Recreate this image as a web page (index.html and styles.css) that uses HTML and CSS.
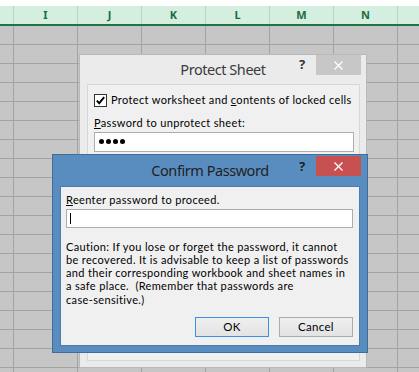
FILE: index.html
```html
<!DOCTYPE html>
<html lang="en">
<head>
<meta charset="utf-8">
<title>Confirm Password</title>
<link rel="stylesheet" href="styles.css">
</head>
<body>
<div class="screen">
  <div class="colhead">
    <div class="hc edge"></div>
    <div class="hc">I</div>
    <div class="hc">J</div>
    <div class="hc">K</div>
    <div class="hc">L</div>
    <div class="hc">M</div>
    <div class="hc">N</div>
    <div class="hc"></div>
  </div>
  <div class="grid"></div>

  <section class="win protect">
    <header class="titlebar">
      <span class="title">Protect Sheet</span>
      <div class="controls">
        <span class="help">?</span>
        <span class="close"><svg width="9" height="9" viewBox="0 0 9 9"><path d="M0.5 0.5 L8.5 8.5 M8.5 0.5 L0.5 8.5" stroke="#fff" stroke-width="1.3" fill="none"/></svg></span>
      </div>
    </header>
    <div class="panel">
      <div class="check-row">
        <span class="checkbox"><svg width="11" height="11" viewBox="0 0 11 11"><path d="M1.8 5.6 L4.2 8.2 L9.2 2.2" stroke="#000" stroke-width="1.9" fill="none"/></svg></span>
        <span class="text">Protect worksheet and <u>c</u>ontents of locked cells</span>
      </div>
      <div class="text pw-label"><u>P</u>assword to unprotect sheet:</div>
      <div class="pw-input"><span class="dot"></span><span class="dot"></span><span class="dot"></span><span class="dot"></span></div>
    </div>
  </section>

  <section class="win confirm">
    <header class="titlebar">
      <span class="title">Confirm Password</span>
      <div class="controls">
        <span class="help">?</span>
        <span class="close"><svg width="9" height="9" viewBox="0 0 9 9"><path d="M0.5 0.5 L8.5 8.5 M8.5 0.5 L0.5 8.5" stroke="#fff" stroke-width="1.3" fill="none"/></svg></span>
      </div>
    </header>
    <div class="cbody">
      <div class="text"><u>R</u>eenter password to proceed.</div>
      <div class="c-input"><span class="caret"></span></div>
      <p class="text caution">Caution: If you lose or forget the password, it cannot<br>be recovered. It is advisable to keep a list of passwords<br>and their corresponding workbook and sheet names in<br>a safe place.&nbsp; (Remember that passwords are<br>case-sensitive.)</p>
      <div class="buttons">
        <button class="btn default" type="button">OK</button>
        <button class="btn" type="button">Cancel</button>
      </div>
    </div>
  </section>
</div>
</body>
</html>
```
FILE: styles.css
```css
* { box-sizing: border-box; }
html, body { margin: 0; padding: 0; background: #fff; }
body { font-family: "Noto Sans", "DejaVu Sans", sans-serif; color: #000; }

.screen {
  position: relative;
  width: 419px;
  height: 372px;
  overflow: hidden;
  display: flex;
  flex-direction: column;
  padding-top: 6px;
}

.colhead {
  display: flex;
  flex: none;
  height: 20px;
  background: #d4eedf;
  border-bottom: 2px solid #217346;
}
.hc {
  flex: none;
  width: 64px;
  border-left: 1px solid #b3d5c0;
  text-align: center;
  font: bold 11px/18px "Noto Sans", sans-serif;
  color: #1d6b40;
}
.hc.edge { width: 13px; border-left: 0; }

.grid {
  flex: 1;
  background-color: #c6c6c6;
  background-image:
    linear-gradient(to right, #a3a3a3 1px, transparent 1px),
    linear-gradient(to bottom, #a3a3a3 1px, transparent 1px);
  background-size: 64px 100%, 100% 19px;
  background-position: 13px 0, 0 18px;
}

.win {
  position: absolute;
  display: flex;
  flex-direction: column;
}
.protect {
  left: 79px;
  top: 54px;
  width: 288px;
  height: 314px;
  background: #ebebeb;
  border: 1px solid #b9b9b9;
}
.confirm {
  left: 52px;
  top: 154px;
  width: 316px;
  height: 199px;
  background: #5a8dbf;
  border: 1px solid #3f6d99;
}

.titlebar {
  flex: none;
  display: grid;
  grid-template-columns: 1fr auto 1fr;
}
.protect .titlebar { height: 29px; }
.confirm .titlebar { height: 31px; }

.title {
  grid-column: 2;
  font-size: 14.5px;
  line-height: 17px;
  letter-spacing: -0.45px;
  white-space: nowrap;
}
.protect .title { padding-top: 5.9px; color: #3b3b3b; }
.confirm .title { padding-top: 6.9px; color: #1f1f1f; }

.controls {
  grid-column: 3;
  justify-self: end;
  display: flex;
  align-items: flex-start;
}
.protect .controls { margin-right: 5px; }
.confirm .controls { margin-right: 6px; padding-top: 1px; }

.help {
  width: 14px;
  margin-right: 7px;
  text-align: center;
  font: bold 13px/13px "Noto Sans", sans-serif;
}
.protect .help { margin-top: 3.4px; color: #333; }
.confirm .help { margin-top: 4.4px; color: #1f1f1f; }

.close {
  width: 45px;
  height: 20px;
  display: flex;
  align-items: center;
  justify-content: center;
}
.protect .close { background: #c7c7c7; }
.confirm .close { background: #c75050; }

.text {
  font-family: Lato, "Noto Sans", sans-serif;
  font-size: 11px;
  line-height: 13.3px;
  letter-spacing: 0.35px;
  white-space: nowrap;
}

.panel {
  flex: 1;
  margin: 0 6px 6px 7px;
  background: #f0f0f0;
  border: 1px solid #d7d7d7;
  padding: 8px 5px 0 6px;
}
.check-row {
  display: flex;
  align-items: flex-start;
  gap: 4px;
}
.checkbox {
  flex: none;
  width: 13px;
  height: 13px;
  margin-top: 1px;
  border: 1px solid #333;
  background: #fff;
  display: flex;
  align-items: center;
  justify-content: center;
}
.pw-label { margin-top: 9.4px; }
.pw-input {
  margin-top: 2.3px;
  height: 20px;
  background: #fff;
  border: 1px solid #abadb3;
  display: flex;
  align-items: center;
  gap: 2px;
  padding-left: 4px;
}
.dot {
  width: 5px;
  height: 5px;
  border-radius: 50%;
  background: #000;
}

.cbody {
  flex: 1;
  margin: 0 7px 6px 7px;
  background: #f0f0f0;
  border: 1px solid #4b7cab;
  padding: 5.5px 6px 0 5px;
  display: flex;
  flex-direction: column;
}
.c-input {
  margin-top: 3.2px;
  height: 19px;
  background: #fff;
  border: 1px solid #abadb3;
  padding: 3px 0 0 3px;
}
.caret {
  display: block;
  width: 1px;
  height: 11px;
  background: #000;
}
.caution { margin: 11.6px 0 0; }

.buttons {
  margin-top: 10.9px;
  display: flex;
  justify-content: flex-end;
  gap: 10px;
}
.btn {
  width: 74px;
  height: 20px;
  padding: 0;
  border: 1px solid #acacac;
  background: linear-gradient(#efefef, #e3e3e3);
  font-family: Lato, "Noto Sans", sans-serif;
  font-size: 11.5px;
  letter-spacing: 0.3px;
  line-height: 18px;
  color: #000;
  text-align: center;
}
.btn.default { border-color: #3c8fe6; }
```
